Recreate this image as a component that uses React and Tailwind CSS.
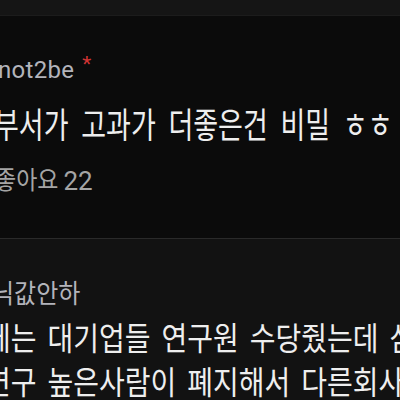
const FONT = "font-['Roboto','Noto_Sans_CJK_KR',sans-serif]"

export default function App() {
    return (
        <div className={`w-[400px] h-[400px] overflow-hidden bg-[#121212] ${FONT}`}>
            <div className="h-[16px] bg-[#151515] border-b border-[#1c1c1c]" />

            {/* first comment */}
            <div className="bg-[#0b0b0b] h-[222px] pt-[39px] overflow-hidden whitespace-nowrap">
                <div className="h-[30px] flex items-center -ml-[9px] text-[24px] tracking-[0.3px] text-[#b3b4bb]">
                    <span>-not2be</span>
                    <span className="ml-[8px] -mt-[10px] text-[21px] text-[#d23434]">*</span>
                </div>
                <div className="h-[40px] mt-[21px] flex items-center -ml-[6px] text-[27px] [word-spacing:6px] text-[#eeeeee]">
                    <span className="inline-block scale-y-[1.3]">부서가 고과가 더좋은건 비밀 ㅎㅎ</span>
                </div>
                <div className="h-[30px] mt-[20px] flex items-center -ml-[5px] text-[#a5a5a5]">
                    <span className="inline-block text-[23px] scale-y-[1.1]">좋아요</span>
                    <span className="ml-[5px] text-[26px]">22</span>
                </div>
            </div>

            <div className="h-px bg-[#2a2a2a]" />

            {/* second comment */}
            <div className="pt-[40px] overflow-hidden whitespace-nowrap">
                <div className="h-[30px] flex items-center -ml-[8px] text-[24px] text-[#b3b4bb]">
                    <span className="inline-block scale-y-[1.1]">닉값안하</span>
                </div>
                <div className="h-[44px] mt-[9px] flex items-center text-[28px] [word-spacing:4px] text-[#eeeeee] -ml-[15px]">
                    <span className="inline-block scale-y-[1.15]">에는 대기업들 연구원 수당줬는데 삼성</span>
                </div>
                <div className="h-[44px] flex items-center text-[28px] [word-spacing:4px] text-[#eeeeee] -ml-[15px]">
                    <span className="inline-block scale-y-[1.15]">연구 높은사람이 폐지해서 다른회사들도</span>
                </div>
            </div>
        </div>
    )
}
